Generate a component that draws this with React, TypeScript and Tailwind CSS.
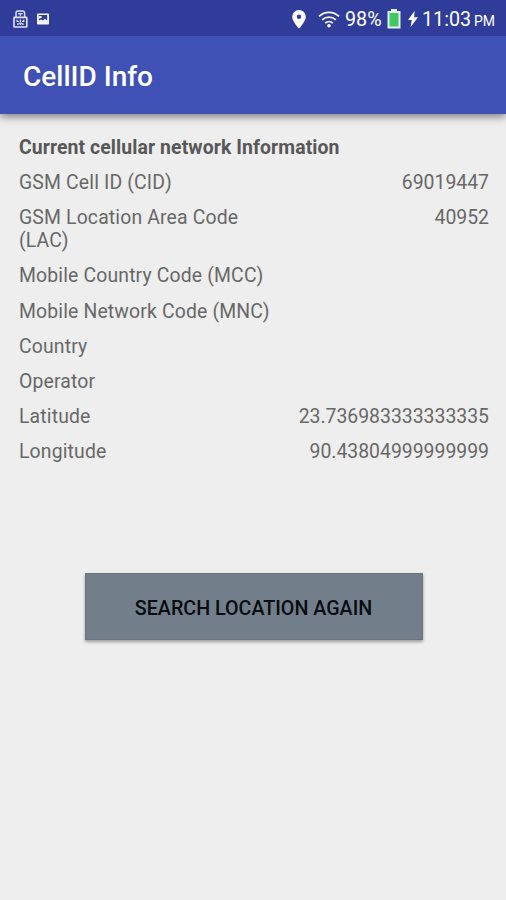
const rows: { label: string; value?: string }[] = [
  { label: 'GSM Cell ID (CID)', value: '69019447' },
  { label: 'GSM Location Area Code (LAC)', value: '40952' },
  { label: 'Mobile Country Code (MCC)' },
  { label: 'Mobile Network Code (MNC)' },
  { label: 'Country' },
  { label: 'Operator' },
  { label: 'Latitude', value: '23.736983333333335' },
  { label: 'Longitude', value: '90.43804999999999' },
];

function StatusBar() {
  return (
    <div className="relative z-10 flex h-9 items-center bg-[#303c9a] pt-[2px] pr-[11px] pl-[13px] text-white">
      <svg className="h-[18px] w-[15px]" viewBox="0 0 15 18" fill="none" stroke="#dfe3fb">
        <path d="M3 8V3.2Q3 1 5.2 1h4.2q2.2 0 2.2 2.2V8" strokeWidth="1.5" />
        <path d="M5 3.6h4.6M7.3 3.6v2.6" strokeWidth="1.1" />
        <rect x="1" y="7.4" width="12.8" height="9.6" rx="0.6" strokeWidth="1.6" />
        <path d="M4 9.8v1.6h1.8M10.8 9.8v1.6H9M7.4 9.6v3M4 14.2h1.8M9 14.2h1.8M5.8 12.8l1.6 1.6L9 12.8" strokeWidth="1.2" />
      </svg>
      <svg className="ml-[9px] h-3 w-3" viewBox="0 0 12 12">
        <rect y="0.5" width="12" height="11" rx="1" fill="#f3f4ff" />
        <path d="M1.8 2h8.4v5.4L7.8 5.8 6 7.4 4.2 6.4 1.8 7.4z" fill="#303c9a" />
        <path d="M1.8 3h2.4l.9 1.5-3.3 1.3z" fill="#f3f4ff" />
      </svg>
      <svg className="ml-auto h-[19px] w-[14px]" viewBox="0 0 14 19" fill="#fff">
        <path fillRule="evenodd" d="M7 0a6.8 6.8 0 0 0-6.8 6.8C.2 11.6 7 18.6 7 18.6s6.8-7 6.8-11.8A6.8 6.8 0 0 0 7 0zm0 4.6a2.2 2.2 0 1 1 0 4.4 2.2 2.2 0 0 1 0-4.4z" />
      </svg>
      <svg className="ml-3 h-[17px] w-[22px]" viewBox="0 0 22 17" fill="none" stroke="#f1f3ff" strokeWidth="1.8">
        <path d="M1 5.4a14.2 14.2 0 0 1 20 0M4.2 8.9a9.8 9.8 0 0 1 13.6 0M7.2 12.2a5.5 5.5 0 0 1 7.6 0" />
        <circle cx="11" cy="14.8" r="1.8" fill="#fff" stroke="none" />
      </svg>
      <span className="ml-[5px] w-[37px] pt-px text-[19.7px] leading-6 whitespace-nowrap">98%</span>
      <svg className="ml-[5px] h-5 w-[14px]" viewBox="0 0 14 20">
        <path d="M4 0h6v2h3.5v17.5H.5V2H4z" fill="#e8edf0" />
        <path d="M2.5 4h9v13.5h-9z" fill="#42c860" />
      </svg>
      <svg className="ml-[7px] h-4 w-[10px]" viewBox="0 0 10 16" fill="#fff">
        <path d="M6.6 0 0 9h3.8L2.6 16 10 6.3H6.1z" />
      </svg>
      <span className="ml-1 flex w-[73px] items-baseline justify-between pt-[2px] leading-6 whitespace-nowrap">
        <span className="text-[19.7px]">11:03</span>
        <span className="text-[14px]">PM</span>
      </span>
    </div>
  );
}

export default function App() {
  return (
    <div className="flex h-[900px] w-[506px] flex-col bg-[#eeeeee] font-['Roboto',sans-serif] text-[19.4px] leading-[23px] text-[#686868]">
      <StatusBar />
      <header className="flex h-[78px] items-center bg-[#3f51b5] pt-[4px] pl-[23px] shadow-[0_3px_8px_rgba(0,0,0,0.45)]">
        <h1 className="text-[28px] leading-8 font-medium text-white">CellID Info</h1>
      </header>
      <main className="flex flex-col pt-[22px] pr-[17px] pl-[19px]">
        <h2 className="mb-3 font-bold tracking-[0.1px] text-[#585858]">Current cellular network Information</h2>
        <dl className="flex flex-col gap-[12.2px]">
          {rows.map((row) => (
            <div key={row.label} className="flex justify-between">
              <dt className="w-[254px] tracking-[0.15px]">{row.label}</dt>
              <dd>{row.value}</dd>
            </div>
          ))}
        </dl>
        <button className="mt-[110px] mr-[1px] h-[67px] w-[338px] self-center border border-[#667580] bg-[#727f8a] pt-[3px] text-[19.7px] font-medium text-[#080c10] shadow-[0_2px_3px_rgba(0,0,0,0.35)]">
          SEARCH LOCATION AGAIN
        </button>
      </main>
    </div>
  );
}
